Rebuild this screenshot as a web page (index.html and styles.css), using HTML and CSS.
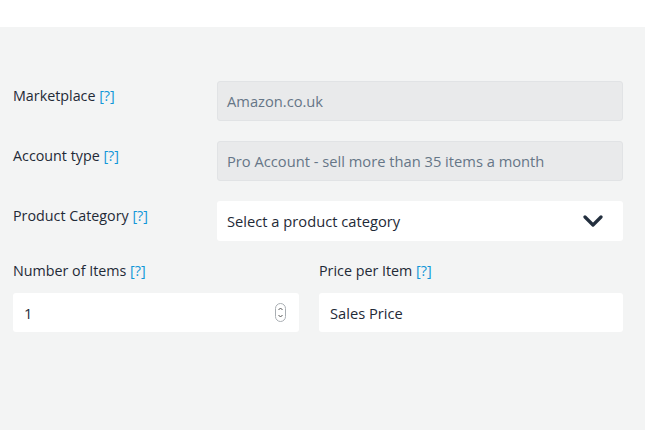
FILE: index.html
```html
<!DOCTYPE html>
<html lang="en">
<head>
<meta charset="utf-8">
<title>Amazon fee calculator</title>
<link rel="stylesheet" href="styles.css">
</head>
<body>
<div class="topbar"></div>
<main class="panel">
  <div class="row">
    <label class="label">Marketplace <a class="help">[?]</a></label>
    <div class="field field-disabled">Amazon.co.uk</div>
  </div>
  <div class="row">
    <label class="label">Account type <a class="help">[?]</a></label>
    <div class="field field-disabled">Pro Account - sell more than 35 items a month</div>
  </div>
  <div class="row">
    <label class="label">Product Category <a class="help">[?]</a></label>
    <div class="field field-select">
      <span>Select a product category</span>
      <svg class="chevron" width="20" height="13" viewBox="0 0 20 13"><path d="M2 2 L10 10 L18 2" fill="none" stroke="#232f3e" stroke-width="3.2" stroke-linecap="round" stroke-linejoin="round"/></svg>
    </div>
  </div>
  <div class="split">
    <div class="col">
      <label class="label label-top">Number of Items <a class="help">[?]</a></label>
      <div class="field field-input">
        <span>1</span>
        <svg class="spin" width="11" height="19" viewBox="0 0 11 19"><rect x="0.5" y="0.5" width="10" height="18" rx="5" fill="#fff" stroke="#a9aeb3"/><path d="M3.5 7 L5.5 5 L7.5 7" fill="none" stroke="#555" stroke-width="1"/><path d="M3.5 12 L5.5 14 L7.5 12" fill="none" stroke="#555" stroke-width="1"/></svg>
      </div>
    </div>
    <div class="col">
      <label class="label label-top">Price per Item <a class="help">[?]</a></label>
      <div class="field field-input"><span>Sales Price</span></div>
    </div>
  </div>
</main>
</body>
</html>
```
FILE: styles.css
```css
html, body {
  margin: 0;
  padding: 0;
  height: 100%;
}
body {
  font-family: "Open Sans", "Liberation Sans", sans-serif;
  font-size: 14.3px;
  line-height: 20px;
  color: #1f2a37;
  background: #f3f4f4;
}
.topbar {
  height: 27px;
  background: #ffffff;
}
.panel {
  background: #f3f4f4;
  padding: 54px 22px 0 13px;
}
.row {
  display: grid;
  grid-template-columns: 204px 1fr;
  align-items: start;
  margin-bottom: 20px;
}
.label {
  display: block;
  padding-top: 5px;
  color: #1f2a37;
}
.label-top {
  padding-top: 0;
  margin-bottom: 12px;
}
.help {
  color: #1196d8;
}
.field {
  box-sizing: border-box;
  height: 40px;
  border-radius: 3px;
  display: flex;
  align-items: center;
  padding: 0 10px;
  font-size: 14.7px;
}
.field-disabled {
  background: #e9eaeb;
  border: 1px solid #e1e3e5;
  padding: 0 9px;
  color: #667687;
}
.field-select {
  background: #ffffff;
  justify-content: space-between;
  padding-right: 20px;
  color: #1f2a37;
}
.split {
  display: grid;
  grid-template-columns: 286px 1fr;
  column-gap: 20px;
}
.field-input {
  background: #ffffff;
  justify-content: space-between;
  padding: 0 13px 0 11px;
  height: 39px;
  color: #1f2a37;
}
.spin {
  display: block;
}
.chevron {
  display: block;
}
```
